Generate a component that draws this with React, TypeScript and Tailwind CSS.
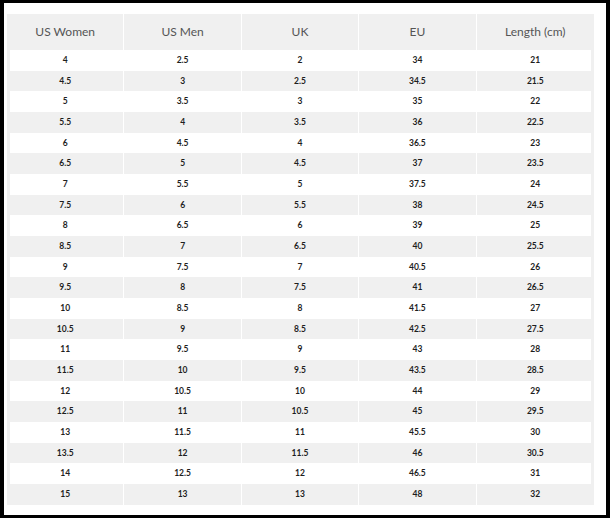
import React from "react";

const rows: string[][] = [
  ["4", "2.5", "2", "34", "21"],
  ["4.5", "3", "2.5", "34.5", "21.5"],
  ["5", "3.5", "3", "35", "22"],
  ["5.5", "4", "3.5", "36", "22.5"],
  ["6", "4.5", "4", "36.5", "23"],
  ["6.5", "5", "4.5", "37", "23.5"],
  ["7", "5.5", "5", "37.5", "24"],
  ["7.5", "6", "5.5", "38", "24.5"],
  ["8", "6.5", "6", "39", "25"],
  ["8.5", "7", "6.5", "40", "25.5"],
  ["9", "7.5", "7", "40.5", "26"],
  ["9.5", "8", "7.5", "41", "26.5"],
  ["10", "8.5", "8", "41.5", "27"],
  ["10.5", "9", "8.5", "42.5", "27.5"],
  ["11", "9.5", "9", "43", "28"],
  ["11.5", "10", "9.5", "43.5", "28.5"],
  ["12", "10.5", "10", "44", "29"],
  ["12.5", "11", "10.5", "45", "29.5"],
  ["13", "11.5", "11", "45.5", "30"],
  ["13.5", "12", "11.5", "46", "30.5"],
  ["14", "12.5", "12", "46.5", "31"],
  ["15", "13", "13", "48", "32"],
];

const headers = ["US Women", "US Men", "UK", "EU", "Length (cm)"];

export default function App() {
  return (
    <div className="w-[610px] h-[518px] bg-black pt-[3px] pb-[3px] pl-[4px] pr-[4px] font-['Lato',sans-serif]">
      <div className="h-full bg-white pt-[11px] pl-[3px] pr-[12px]">
        <div className="w-[587px] bg-[#f0f0f0]">
          <div className="grid grid-cols-5 h-[36px]">
            {headers.map((h, i) => (
              <div
                key={h}
                className={`flex items-center justify-center text-[12px] text-[#555555] ${
                  i < 4 ? "border-r border-white" : ""
                }`}
              >
                {h}
              </div>
            ))}
          </div>
          {rows.map((r, ri) => {
            const white = ri % 2 === 0;
            return (
              <div
                key={ri}
                className={`grid grid-cols-5 h-[20.68px] ${
                  white
                    ? "bg-white shadow-[inset_3px_0_0_#f0f0f0,inset_-3px_0_0_#f0f0f0]"
                    : ""
                }`}
              >
                {r.map((c, ci) => (
                  <div
                    key={ci}
                    className={`flex items-center justify-center text-[8.5px] font-bold text-[#1e1e1e] ${
                      ci < 4 && !white ? "border-r border-white" : ""
                    } ${ci < 4 && white ? "border-r border-transparent" : ""}`}
                  >
                    {c}
                  </div>
                ))}
              </div>
            );
          })}
        </div>
      </div>
    </div>
  );
}
